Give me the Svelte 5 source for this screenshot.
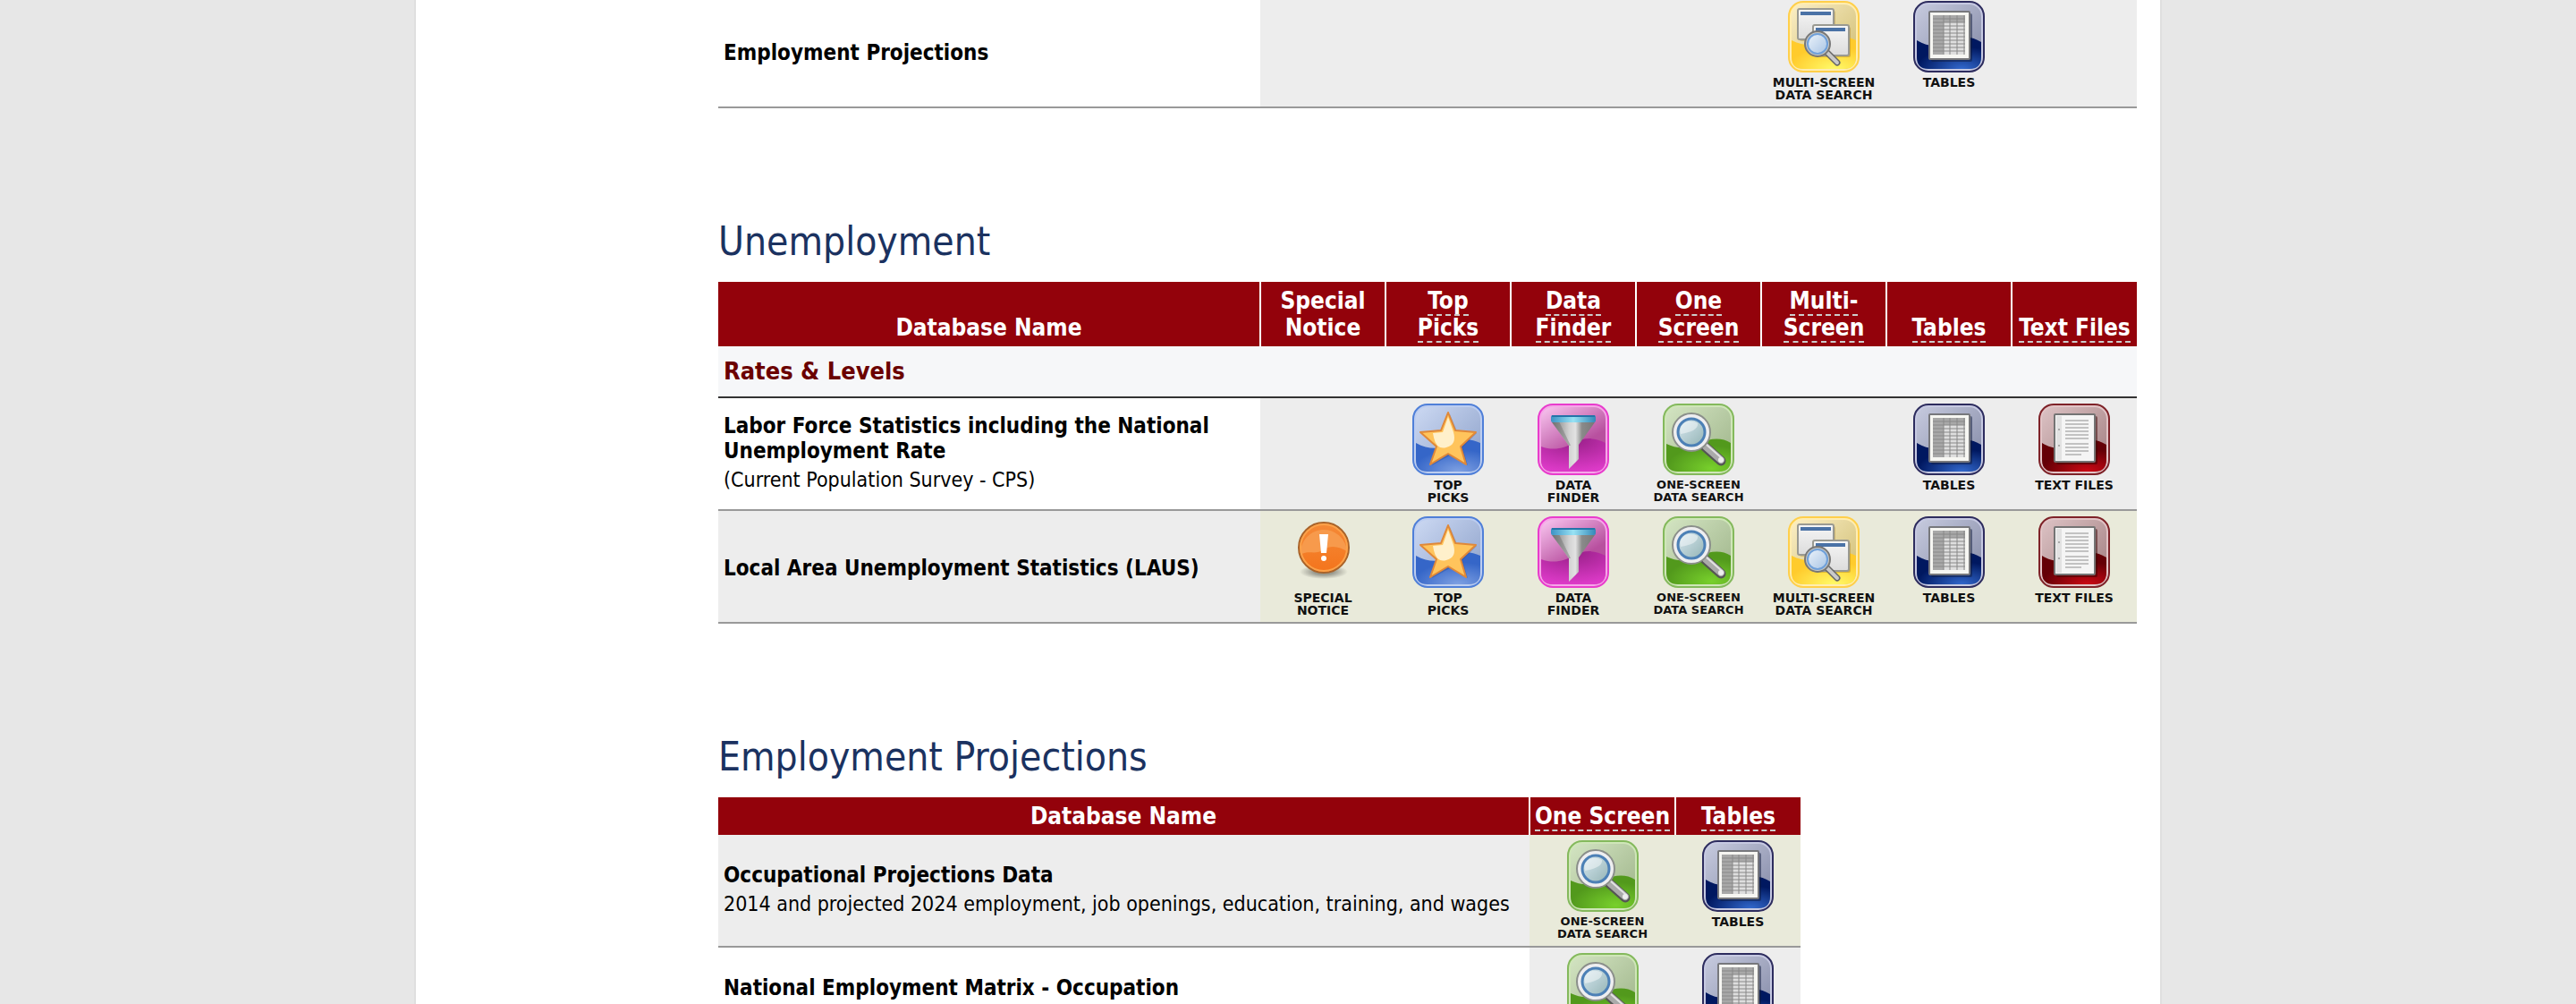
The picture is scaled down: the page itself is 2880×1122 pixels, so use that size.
<script>
  const labels = {
    notice: ['SPECIAL', 'NOTICE'],
    picks: ['TOP', 'PICKS'],
    finder: ['DATA', 'FINDER'],
    one: ['ONE-SCREEN', 'DATA SEARCH'],
    multi: ['MULTI-SCREEN', 'DATA SEARCH'],
    tables: ['TABLES'],
    text: ['TEXT FILES']
  };

  const tiles = {
    picks: { edge: '#4f7fd8', rim: '#bccdf0', top: 'url(#blueTop)', low: 'url(#blueLow)', wave: 'M4 44C20 53 34 50 44 45C56 38 66 40 76 44V63Q76 76 63 76H17Q4 76 4 63Z' },
    finder: { edge: '#e83ccc', rim: '#f6a6e8', top: 'url(#pinkTop)', low: 'url(#pinkLow)', wave: 'M4 48C18 53 30 50 40 44C52 37 66 38 76 44V63Q76 76 63 76H17Q4 76 4 63Z' },
    one: { edge: '#84b95c', rim: '#cfe6b8', top: 'url(#greenTop)', low: 'url(#greenLow)', wave: 'M4 45C16 51 30 50 40 45C54 38 66 38 76 44V63Q76 76 63 76H17Q4 76 4 63Z' },
    multi: { edge: '#ffcf4a', rim: '#ffedb0', top: 'url(#goldTop)', low: 'url(#goldLow)', wave: 'M4 44C20 52 34 50 46 44C58 38 68 40 76 44V63Q76 76 63 76H17Q4 76 4 63Z' },
    tables: { edge: '#2d2c5e', rim: '#c6c9e2', top: 'url(#navyTop)', low: 'url(#navyLow)', wave: 'M4 44C20 54 34 50 46 44C58 38 66 40 76 46V63Q76 76 63 76H17Q4 76 4 63Z' },
    text: { edge: '#7e2228', rim: '#e2c4c6', top: 'url(#redTop)', low: 'url(#redLow)', wave: 'M4 44C20 54 34 50 46 44C58 38 66 40 76 46V63Q76 76 63 76H17Q4 76 4 63Z' }
  };

  const unemploymentHeads = [
    ['Special', 'Notice'], ['Top', 'Picks'], ['Data', 'Finder'], ['One', 'Screen'],
    ['Multi-', 'Screen'], ['Tables'], ['Text Files']
  ];
  const unemploymentRows = [
    { name: 'Labor Force Statistics including the National Unemployment Rate', note: '(Current Population Survey - CPS)', tools: ['', 'picks', 'finder', 'one', '', 'tables', 'text'] },
    { name: 'Local Area Unemployment Statistics (LAUS)', note: '', tools: ['notice', 'picks', 'finder', 'one', 'multi', 'tables', 'text'] }
  ];
  const projectionRows = [
    { name: 'Occupational Projections Data', note: '2014 and projected 2024 employment, job openings, education, training, and wages', tools: ['one', 'tables'] },
    { name: 'National Employment Matrix - Occupation', note: '\u00a0', tools: ['one', 'tables'] }
  ];
  const gridRows = [24, 28, 32, 36, 40, 44, 48, 52, 56];
  const textLines = [19, 23, 27, 31, 35, 39, 45, 49, 53];
</script>

{#snippet icon(kind)}
  <svg class="icon" viewBox="0 0 80 80" aria-hidden="true">
    {#if kind === 'notice'}
      <ellipse cx="41" cy="62" rx="27" ry="8" fill="url(#shade)" />
      <circle cx="41" cy="35" r="28" fill="url(#orangeLow)" stroke="#a8632a" stroke-width="2" />
      <path d="M15 43C24 37 32 44 41 37C50 31 60 35 67 39A26 26 0 1 0 15 43Z" fill="#f79a4c" />
      <circle cx="41" cy="35" r="26" fill="none" stroke="#fba24a" stroke-width="2" />
      <path d="M36 20H46L44 41H38Z" fill="#fff" />
      <circle cx="41" cy="47" r="3" fill="#fff" />
    {:else}
      {@const t = tiles[kind]}
      <rect x="1" y="1" width="78" height="78" rx="16" fill={t.rim} stroke={t.edge} stroke-width="2" />
      <rect x="4" y="4" width="72" height="72" rx="13" fill={t.top} />
      <path d={t.wave} fill={t.low} />
    {/if}
    {#if kind === 'picks'}
      <path d="M42 12L50 31L72 33L56 49L62 69L42 58L22 69L28 50L12 34L34 31Z" fill="#1d3d86" opacity=".3" />
      <path d="M40 10L48 30L71 32L54 48L60 68L40 56L20 68L27 48L9 32L32 30Z" fill="#ffc45c" stroke="#e08838" stroke-width="2" stroke-linejoin="round" />
      <path d="M40 15L46 32Q50 46 38 49Q27 52 24 38L23 33L34 32Z" fill="#fff0cb" />
    {:else if kind === 'finder'}
      <path d="M16 21H64L46 46V62L35 73V47Z" fill="url(#steel)" />
      <path d="M16 20L35 47L37 47L24 20Z" fill="#666" opacity=".4" />
      <rect x="15" y="13" width="50" height="8" rx="2" fill="url(#teal)" />
      <path d="M16 14H64" stroke="#2474a8" stroke-width="2" />
    {:else if kind === 'one'}
      <path d="M47 48L65 64" stroke="#555" stroke-width="11" stroke-linecap="round" />
      <path d="M48 48L65 63" stroke="#aaa" stroke-width="8" stroke-linecap="round" />
      <path d="M49 46L66 61" stroke="#e2e2e2" stroke-width="2" stroke-linecap="round" />
      <circle cx="65" cy="63" r="3" fill="#eee" />
      <circle cx="32" cy="32" r="21" fill="#eeeef0" stroke="#8b8f8b" stroke-width="2" />
      <circle cx="32" cy="32" r="15" fill="url(#glass)" stroke="#4c80b6" stroke-width="3" />
      <path d="M20 34C17 23 28 16 39 22C40 29 31 32 20 34Z" fill="#fff" opacity=".45" />
    {:else if kind === 'multi'}
      <rect x="13" y="11" width="40" height="34" rx="2" fill="#a07820" opacity=".35" />
      <rect x="11" y="9" width="40" height="34" rx="2" fill="url(#page)" stroke="#9a9a92" stroke-width="2" />
      <path d="M14 14H48" stroke="#4a72a6" stroke-width="4" />
      <rect x="30" y="29" width="40" height="34" rx="2" fill="#a07820" opacity=".4" />
      <rect x="28" y="27" width="40" height="34" rx="2" fill="url(#page)" stroke="#9a9a92" stroke-width="2" />
      <path d="M31 32H64" stroke="#4a72a6" stroke-width="4" />
      <path d="M43 57L55 69" stroke="#666" stroke-width="7" stroke-linecap="round" />
      <path d="M43 57L55 69" stroke="#c9c9c9" stroke-width="4" stroke-linecap="round" />
      <circle cx="33" cy="48" r="14" fill="#c8c8c4" stroke="#777" stroke-width="2" />
      <circle cx="33" cy="48" r="11" fill="url(#lens)" stroke="#6fa0da" stroke-width="2" />
    {:else if kind === 'tables'}
      <rect x="20" y="14" width="46" height="54" rx="2" fill="#101a3a" opacity=".5" />
      <rect x="18" y="12" width="45" height="53" rx="1" fill="#f6f6f2" stroke="#77787c" stroke-width="2" />
      <rect x="22" y="16" width="36" height="44" fill="#dedede" />
      <path d="M22 16H58V24H34V60H22Z" fill="#a8a8a8" />
      {#each gridRows as y}
        <path d={`M22 ${y}H58`} stroke="#888" stroke-width="1" />
      {/each}
      <path d="M22 20H58M34 16V60M41 16V60M49 16V60M57 16V60" stroke="#888" stroke-width="1" />
    {:else if kind === 'text'}
      <rect x="20" y="14" width="46" height="54" rx="2" fill="#300" opacity=".5" />
      <rect x="18" y="12" width="45" height="53" rx="1" fill="#f5f5f5" stroke="#747474" stroke-width="2" />
      <rect x="20" y="14" width="6" height="49" fill="#e2e2e2" />
      {#each textLines as y}
        <path d={`M30 ${y}H56`} stroke="#c2c2c2" stroke-width="2" />
      {/each}
      <path d="M30 57H48" stroke="#c2c2c2" stroke-width="2" />
      <circle cx="23" cy="29" r="1" fill="#999" />
      <circle cx="23" cy="47" r="1" fill="#999" />
    {/if}
  </svg>
{/snippet}

{#snippet tool(kind)}
  <td class="tool">
    {#if kind}
      <a class="badge" class:compact={kind === 'one'} href="#{kind}">
        {@render icon(kind)}
        {#each labels[kind] as line}<span>{line}</span>{/each}
      </a>
    {/if}
  </td>
{/snippet}

{#snippet body(row, shaded)}
  <tr class:shaded>
    <td class="name" class:solo={!row.note}>
      <strong>{row.name}</strong>
      {#if row.note}<p>{row.note}</p>{/if}
    </td>
    {#each row.tools as kind}{@render tool(kind)}{/each}
  </tr>
{/snippet}

<svg class="defs" aria-hidden="true">
  <defs>
    <linearGradient id="blueTop" x2="1" y2="1"><stop stop-color="#cbd8f2" /><stop offset="1" stop-color="#8b9fc8" /></linearGradient>
    <radialGradient id="blueLow" cx=".65" cy="1" r=".7"><stop stop-color="#7ea0e2" /><stop offset="1" stop-color="#3566c8" /></radialGradient>
    <linearGradient id="pinkTop" x2=".6" y2="1"><stop stop-color="#f9c6f0" /><stop offset=".7" stop-color="#b8509f" /></linearGradient>
    <radialGradient id="pinkLow" cx=".5" cy="0" r="1"><stop stop-color="#961f86" /><stop offset="1" stop-color="#dd3ac8" /></radialGradient>
    <linearGradient id="greenTop" x2="1" y2="1"><stop stop-color="#d3e4c2" /><stop offset="1" stop-color="#9cb287" /></linearGradient>
    <radialGradient id="greenLow" cx=".7" cy=".9" r=".7"><stop stop-color="#78d02c" /><stop offset="1" stop-color="#52991c" /></radialGradient>
    <linearGradient id="goldTop" x2="1" y2="1"><stop stop-color="#fbeec4" /><stop offset="1" stop-color="#cdbb70" /></linearGradient>
    <radialGradient id="goldLow" cx=".65" cy="1" r=".7"><stop stop-color="#fffa68" /><stop offset="1" stop-color="#ffcb2c" /></radialGradient>
    <linearGradient id="navyTop" x2="1" y2="1"><stop stop-color="#c6cade" /><stop offset="1" stop-color="#8187a4" /></linearGradient>
    <radialGradient id="navyLow" cx=".7" cy="1" r=".7"><stop stop-color="#3268cc" /><stop offset="1" stop-color="#001860" /></radialGradient>
    <linearGradient id="redTop" x2="1" y2="1"><stop stop-color="#dcc2c4" /><stop offset="1" stop-color="#a07c7e" /></linearGradient>
    <radialGradient id="redLow" cx=".7" cy="1" r=".7"><stop stop-color="#cc0814" /><stop offset="1" stop-color="#640006" /></radialGradient>
    <linearGradient id="orangeLow" y2="1" x2="0"><stop stop-color="#f58a38" /><stop offset="1" stop-color="#f4741c" /></linearGradient>
    <radialGradient id="shade"><stop offset=".4" stop-color="#000" stop-opacity=".35" /><stop offset="1" stop-color="#000" stop-opacity="0" /></radialGradient>
    <linearGradient id="steel"><stop stop-color="#777" /><stop offset=".4" stop-color="#d2d2d2" /><stop offset=".55" stop-color="#e2e2e2" /><stop offset=".7" stop-color="#8a8a8a" /><stop offset="1" stop-color="#777" /></linearGradient>
    <linearGradient id="teal"><stop stop-color="#3c92c4" /><stop offset=".5" stop-color="#98e2f4" /><stop offset="1" stop-color="#3488b8" /></linearGradient>
    <linearGradient id="glass" x2="1" y2="1"><stop stop-color="#d8e8f2" /><stop offset="1" stop-color="#94b4b4" /></linearGradient>
    <linearGradient id="lens" x2="1" y2="1"><stop stop-color="#ecf3fa" /><stop offset="1" stop-color="#a8c4e4" /></linearGradient>
    <linearGradient id="page" x2="0" y2="1"><stop stop-color="#f6f6f6" /><stop offset="1" stop-color="#dcdcdc" /></linearGradient>
  </defs>
</svg>

<div class="page">
  <main>
    <table class="previous">
      <colgroup><col class="wide" /><col span="7" /></colgroup>
      <tbody>
        {@render body({ name: 'Employment Projections', note: '', tools: ['', '', '', '', 'multi', 'tables', ''] }, false)}
      </tbody>
    </table>

    <h2>Unemployment</h2>
    <table>
      <colgroup><col class="wide" /><col span="7" /></colgroup>
      <thead>
        <tr>
          <th scope="col">Database Name</th>
          {#each unemploymentHeads as head, i}
            <th scope="col">
              {#if i === 0}
                {head[0]}<br />{head[1]}
              {:else}
                <a href="#about">{head[0]}{#if head[1]}<br />{head[1]}{/if}</a>
              {/if}
            </th>
          {/each}
        </tr>
      </thead>
      <tbody>
        <tr><th class="group" colspan="8" scope="colgroup">Rates &amp; Levels</th></tr>
        {#each unemploymentRows as row, i}{@render body(row, i === 1)}{/each}
      </tbody>
    </table>

    <h2>Employment Projections</h2>
    <table class="short">
      <colgroup><col class="wide" /><col class="mid" /><col /></colgroup>
      <thead>
        <tr>
          <th scope="col">Database Name</th>
          <th scope="col"><a href="#about">One Screen</a></th>
          <th scope="col"><a href="#about">Tables</a></th>
        </tr>
      </thead>
      <tbody>
        {#each projectionRows as row, i}{@render body(row, i === 0)}{/each}
      </tbody>
    </table>
  </main>
</div>

<style>
  :global(body) {
    background: #e7e7e7;
  }
  .defs {
    position: absolute;
    width: 0;
    height: 0;
  }
  .page {
    box-sizing: border-box;
    max-width: 1954px;
    height: 100vh;
    margin: 0 auto;
    overflow: hidden;
    border: solid #dfdfdf;
    border-width: 0 2px;
    background: #fff;
    color: #000;
    font-family: 'DejaVu Sans Condensed', 'Noto Sans', sans-serif;
    font-size: 24px;
    line-height: 28px;
  }
  main {
    padding: 0 26px 0 338px;
  }
  h2 {
    margin: 119px 0 15px;
    color: #1b3260;
    font-size: 44px;
    font-weight: 400;
    line-height: 60px;
  }
  table {
    width: 100%;
    table-layout: fixed;
    border-collapse: collapse;
  }
  .previous {
    margin-top: -5px;
  }
  .short {
    width: 1210px;
    max-width: 100%;
  }
  col {
    width: 140px;
  }
  .mid {
    width: 163px;
  }
  .wide {
    width: auto;
  }
  thead th {
    padding: 6px 0;
    background: #93020b;
    color: #fff;
    font-size: 26px;
    line-height: 30px;
    vertical-align: bottom;
    white-space: nowrap;
  }
  thead th + th {
    border-left: 2px solid #fff;
  }
  thead a {
    color: inherit;
    text-decoration: none;
    border-bottom: 2px dashed #ccc;
  }
  .group {
    padding: 12px 6px;
    border-bottom: 2px solid #333;
    background: #f6f7f9;
    color: #6b0000;
    font-size: 27px;
    line-height: 32px;
    text-align: left;
  }
  td {
    padding: 6px 0;
    border-bottom: 2px solid #999;
  }
  .name {
    padding: 0 6px 2px;
  }
  .solo {
    padding-top: 6px;
  }
  .name strong {
    display: block;
  }
  .name p {
    margin: 4px 0 0;
    font-size: 23px;
  }
  .tool {
    height: 112px;
    background: #ededed;
  }
  .shaded .name {
    background: #ededed;
  }
  .shaded .tool {
    background: #e9eada;
  }
  .badge {
    display: flex;
    flex-direction: column;
    align-items: center;
    min-height: 112px;
    color: #111;
    font: bold 14px/14px 'DejaVu Sans', sans-serif;
    text-decoration: none;
    white-space: nowrap;
  }
  .compact {
    font-size: 13px;
  }
  .icon {
    width: 80px;
    height: 80px;
    margin-bottom: 4px;
  }
</style>
